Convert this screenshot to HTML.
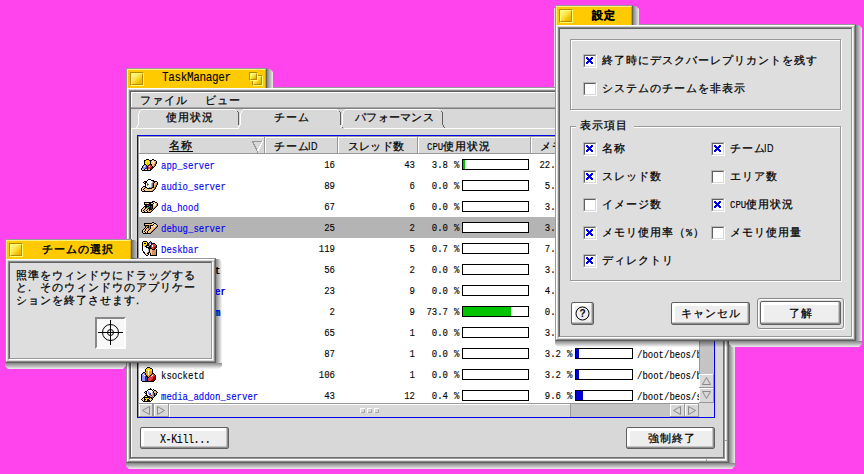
<!DOCTYPE html><html lang="ja"><head><meta charset="utf-8"><style>html,body{margin:0;padding:0;width:864px;height:474px;overflow:hidden;background:#FF44EE;position:relative;font-family:"Liberation Sans",sans-serif;}.t{position:absolute;white-space:nowrap;font-size:11px;line-height:12px;letter-spacing:1px;-webkit-text-stroke:0.25px currentColor;color:#000;}.m{position:absolute;white-space:nowrap;font-family:"Liberation Mono",monospace;font-size:9px;line-height:10px;color:#000;-webkit-text-stroke:0.1px currentColor;transform:scaleY(1.2);transform-origin:0 0;}svg{display:block}</style></head><body>
<div style="position:absolute;left:729px;top:88px;width:6px;height:375px;background:linear-gradient(to right,rgba(0,0,0,.46),rgba(0,0,0,.02)),linear-gradient(#F2F2F2,#F2F2F2);clip-path:polygon(0 0,3px 0,6px 3px,6px 100%,0 100%)"></div>
<div style="position:absolute;left:126px;top:463px;width:609px;height:6px;background:#F2F2F2;clip-path:polygon(0 0,100% 0,100% 3px,calc(100% - 3px) 100%,3px 100%,0 3px)"></div>
<div style="position:absolute;left:126px;top:463px;width:609px;height:6px;background:linear-gradient(to bottom,rgba(0,0,0,.46),rgba(0,0,0,.02));clip-path:polygon(0 0,100% 0,100% 3px,calc(100% - 3px) 100%,3px 100%,0 3px)"></div>
<div style="position:absolute;left:126px;top:87px;width:603px;height:376px;box-sizing:border-box;border-style:solid;border-width:1px;border-color:#989898 #606060 #606060 #989898;"><div style="width:100%;height:100%;box-sizing:border-box;border-style:solid;border-width:1px;border-color:#FFFFFF #888888 #888888 #FFFFFF;"><div style="width:100%;height:100%;box-sizing:border-box;border-style:solid;border-width:1px;border-color:#D8D8D8 #D8D8D8 #D8D8D8 #D8D8D8;"><div style="width:100%;height:100%;box-sizing:border-box;border-style:solid;border-width:1px;border-color:#888888 #FFFFFF #FFFFFF #888888;"><div style="width:100%;height:100%;box-sizing:border-box;border-style:solid;border-width:1px;border-color:#606060 #989898 #989898 #606060;"><div style="width:100%;height:100%;background:#D8D8D8"></div></div></div></div></div></div>
<div style="position:absolute;left:126px;top:68px;width:141px;height:20px;box-sizing:border-box;background:#FFCB00;border-top:1px solid #989898;border-left:1px solid #989898;border-right:1px solid #606060;"><div style="position:absolute;left:0;top:0;right:0;bottom:0;border-top:1px solid #FFF07A;border-left:1px solid #FFF07A;border-right:1px solid #D9A300"></div></div>
<div style="position:absolute;left:267px;top:69px;width:6px;height:19px;background:linear-gradient(to right,rgba(0,0,0,.46),rgba(0,0,0,.02)),linear-gradient(#F2F2F2,#F2F2F2);clip-path:polygon(0 0,3px 0,6px 3px,6px 100%,0 100%)"></div>
<div style="position:absolute;left:130px;top:72px;width:14px;height:14px;box-sizing:border-box;border:1px solid;border-color:#B88A00 #FFFF70 #FFFF70 #B88A00;"><div style="width:100%;height:100%;box-sizing:border-box;border:1px solid;border-color:#FFFF70 #B88A00 #B88A00 #FFFF70;background:linear-gradient(135deg,#FFFAA0,#FFE040 45%,#F0C000 75%,#E8B000)"></div></div>
<div class="m" style="left:162px;top:71px;font-size:11px;line-height:12px;letter-spacing:-0.35px;transform:scaleY(1.1)">TaskManager</div>
<div style="position:absolute;left:252px;top:75px;width:11px;height:11px;box-sizing:border-box;border:1px solid;border-color:#B88A00 #FFFF70 #FFFF70 #B88A00;"><div style="width:100%;height:100%;box-sizing:border-box;border:1px solid;border-color:#FFFF70 #B88A00 #B88A00 #FFFF70;background:linear-gradient(135deg,#FFFAA0,#FFE040 45%,#F0C000 75%,#E8B000)"></div></div>
<div style="position:absolute;left:249px;top:72px;width:9px;height:9px;box-sizing:border-box;border:1px solid;border-color:#B88A00 #FFFF70 #FFFF70 #B88A00;"><div style="width:100%;height:100%;box-sizing:border-box;border:1px solid;border-color:#FFFF70 #B88A00 #B88A00 #FFFF70;background:linear-gradient(135deg,#FFFAA0,#FFE040 45%,#F0C000 75%,#E8B000)"></div></div>
<div style="position:absolute;left:706px;top:459px;width:1px;height:2px;background:#A0A0A0"></div>
<div style="position:absolute;left:725px;top:440px;width:2px;height:1px;background:#A0A0A0"></div>
<div style="position:absolute;left:131px;top:92px;width:593px;height:1px;background:#FFFFFF"></div>
<div style="position:absolute;left:131px;top:92px;width:1px;height:15px;background:#FFFFFF"></div>
<div style="position:absolute;left:723px;top:92px;width:1px;height:366px;background:#6C6C6C"></div>
<div style="position:absolute;left:131px;top:457px;width:593px;height:1px;background:#6C6C6C"></div>
<div style="position:absolute;left:131px;top:107px;width:593px;height:1px;background:#A8A8A8"></div>
<div style="position:absolute;left:131px;top:108px;width:592px;height:1px;background:#808080"></div>
<div class="t" style="left:140px;top:94px;color:#000;">ファイル</div>
<div class="t" style="left:205px;top:94px;color:#000;">ビュー</div>
<svg style="position:absolute;left:0;top:0" width="864" height="474" shape-rendering="crispEdges"><rect x="131" y="128" width="108" height="1" fill="#FFFFFF"/><rect x="344" y="128" width="379" height="1" fill="#FFFFFF"/><rect x="131" y="128" width="1" height="329" fill="#FFFFFF"/><rect x="136" y="127" width="1" height="1" fill="#FFFFFF"/><rect x="137" y="125" width="1" height="2" fill="#FFFFFF"/><rect x="138" y="113" width="1" height="12" fill="#FFFFFF"/><rect x="139" y="111" width="1" height="2" fill="#FFFFFF"/><rect x="140" y="110" width="1" height="1" fill="#FFFFFF"/><rect x="141" y="109" width="94" height="1" fill="#FFFFFF"/><rect x="235" y="110" width="1" height="1" fill="#FFFFFF"/><rect x="237" y="111" width="1" height="1" fill="#606060"/><rect x="238" y="112" width="1" height="13" fill="#606060"/><rect x="238" y="127" width="1" height="1" fill="#FFFFFF"/><rect x="239" y="125" width="1" height="2" fill="#FFFFFF"/><rect x="240" y="113" width="1" height="12" fill="#FFFFFF"/><rect x="241" y="111" width="1" height="2" fill="#FFFFFF"/><rect x="242" y="110" width="1" height="1" fill="#FFFFFF"/><rect x="243" y="109" width="94" height="1" fill="#FFFFFF"/><rect x="337" y="110" width="1" height="1" fill="#FFFFFF"/><rect x="339" y="111" width="1" height="1" fill="#606060"/><rect x="340" y="112" width="1" height="13" fill="#606060"/><rect x="341" y="125" width="1" height="2" fill="#606060"/><rect x="342" y="127" width="1" height="1" fill="#606060"/><rect x="340" y="127" width="1" height="1" fill="#FFFFFF"/><rect x="341" y="125" width="1" height="2" fill="#FFFFFF"/><rect x="342" y="113" width="1" height="12" fill="#FFFFFF"/><rect x="343" y="111" width="1" height="2" fill="#FFFFFF"/><rect x="344" y="110" width="1" height="1" fill="#FFFFFF"/><rect x="345" y="109" width="94" height="1" fill="#FFFFFF"/><rect x="439" y="110" width="1" height="1" fill="#FFFFFF"/><rect x="441" y="111" width="1" height="1" fill="#606060"/><rect x="442" y="112" width="1" height="13" fill="#606060"/><rect x="443" y="125" width="1" height="2" fill="#606060"/><rect x="444" y="127" width="1" height="1" fill="#606060"/></svg>
<div class="t" style="left:166px;top:111px;color:#000;">使用状況</div>
<div class="t" style="left:274px;top:111px;color:#000;">チーム</div>
<div class="t" style="left:355px;top:111px;color:#000;letter-spacing:0.3px">パフォーマンス</div>
<div style="position:absolute;left:137px;top:135px;width:578px;height:283px;background:#0000F0"></div>
<div style="position:absolute;left:138px;top:136px;width:576px;height:281px;background:#FFFFFF"></div>
<div style="position:absolute;left:138px;top:136px;width:576px;height:1px;background:#989898"></div>
<div style="position:absolute;left:138px;top:136px;width:1px;height:281px;background:#989898"></div>
<div style="position:absolute;left:139px;top:137px;width:560px;height:17px;background:#D8D8D8"></div>
<div style="position:absolute;left:139px;top:137px;width:560px;height:1px;background:#FFFFFF"></div>
<div style="position:absolute;left:139px;top:137px;width:1px;height:16px;background:#FFFFFF"></div>
<div style="position:absolute;left:139px;top:153px;width:560px;height:1px;background:#989898"></div>
<div style="position:absolute;left:264px;top:137px;width:1px;height:17px;background:#989898"></div>
<div style="position:absolute;left:265px;top:137px;width:1px;height:16px;background:#FFFFFF"></div>
<div style="position:absolute;left:337px;top:137px;width:1px;height:17px;background:#989898"></div>
<div style="position:absolute;left:338px;top:137px;width:1px;height:16px;background:#FFFFFF"></div>
<div style="position:absolute;left:417px;top:137px;width:1px;height:17px;background:#989898"></div>
<div style="position:absolute;left:418px;top:137px;width:1px;height:16px;background:#FFFFFF"></div>
<div style="position:absolute;left:530px;top:137px;width:1px;height:17px;background:#989898"></div>
<div style="position:absolute;left:531px;top:137px;width:1px;height:16px;background:#FFFFFF"></div>
<div class="t" style="left:169px;top:139px;color:#000;text-decoration:underline;text-underline-offset:2px;">名称</div>
<svg style="position:absolute;left:251px;top:140px" width="13" height="13" shape-rendering="crispEdges"><path d="M1.5 1.5H11.5L6.5 11.5Z" fill="none" stroke="#989898" stroke-width="1"/><path d="M11.5 1.5L6.5 11.5" stroke="#FFFFFF" stroke-width="1"/></svg>
<div class="t" style="left:274px;top:140px;color:#000;">チーム<span style="display:inline-block;margin-left:-2px;font-family:Liberation Sans;font-size:9px;letter-spacing:0.5px;-webkit-text-stroke:0.1px #000;transform:scaleY(1.15);transform-origin:0 70%">ID</span></div>
<div class="t" style="left:348px;top:140px;color:#000;letter-spacing:0.2px">スレッド数</div>
<div class="t" style="left:427px;top:140px;color:#000;"><span style="display:inline-block;font-family:Liberation Mono;font-size:9px;letter-spacing:0;-webkit-text-stroke:0.1px #000;transform:scaleY(1.2);transform-origin:0 70%">CPU</span>使用状況</div>
<div class="t" style="left:540px;top:140px;color:#000;">メモリ</div>
<div style="position:absolute;left:138px;top:154px;width:561px;height:249px;overflow:hidden">
<svg style="position:absolute;left:3px;top:5px" width="17" height="12" shape-rendering="crispEdges"><rect x="5" y="0" width="3" height="1" fill="#000000"/><rect x="11" y="0" width="2" height="1" fill="#000000"/><rect x="3" y="1" width="2" height="1" fill="#000000"/><rect x="5" y="1" width="3" height="1" fill="#FFE000"/><rect x="8" y="1" width="3" height="1" fill="#000000"/><rect x="11" y="1" width="2" height="1" fill="#F4C88C"/><rect x="13" y="1" width="2" height="1" fill="#000000"/><rect x="3" y="2" width="1" height="1" fill="#000000"/><rect x="4" y="2" width="5" height="1" fill="#FFE000"/><rect x="9" y="2" width="1" height="1" fill="#000000"/><rect x="10" y="2" width="1" height="1" fill="#F4C88C"/><rect x="11" y="2" width="1" height="1" fill="#FFFFFF"/><rect x="12" y="2" width="3" height="1" fill="#F4C88C"/><rect x="15" y="2" width="1" height="1" fill="#000000"/><rect x="3" y="3" width="1" height="1" fill="#000000"/><rect x="4" y="3" width="5" height="1" fill="#FFE000"/><rect x="9" y="3" width="1" height="1" fill="#000000"/><rect x="10" y="3" width="2" height="1" fill="#F4C88C"/><rect x="12" y="3" width="1" height="1" fill="#FFFFFF"/><rect x="13" y="3" width="1" height="1" fill="#F4C88C"/><rect x="14" y="3" width="1" height="1" fill="#C07838"/><rect x="15" y="3" width="1" height="1" fill="#000000"/><rect x="3" y="4" width="1" height="1" fill="#000000"/><rect x="4" y="4" width="2" height="1" fill="#FFE000"/><rect x="6" y="4" width="1" height="1" fill="#F0A000"/><rect x="7" y="4" width="2" height="1" fill="#FFE000"/><rect x="9" y="4" width="1" height="1" fill="#000000"/><rect x="10" y="4" width="4" height="1" fill="#F4C88C"/><rect x="14" y="4" width="1" height="1" fill="#C07838"/><rect x="15" y="4" width="1" height="1" fill="#000000"/><rect x="3" y="5" width="2" height="1" fill="#000000"/><rect x="5" y="5" width="1" height="1" fill="#FFE000"/><rect x="6" y="5" width="1" height="1" fill="#F0A000"/><rect x="7" y="5" width="1" height="1" fill="#FFE000"/><rect x="8" y="5" width="3" height="1" fill="#000000"/><rect x="11" y="5" width="2" height="1" fill="#F4C88C"/><rect x="13" y="5" width="1" height="1" fill="#C07838"/><rect x="14" y="5" width="1" height="1" fill="#000000"/><rect x="2" y="6" width="1" height="1" fill="#000000"/><rect x="3" y="6" width="2" height="1" fill="#9090FF"/><rect x="5" y="6" width="1" height="1" fill="#000000"/><rect x="6" y="6" width="1" height="1" fill="#F0A000"/><rect x="7" y="6" width="1" height="1" fill="#000000"/><rect x="8" y="6" width="2" height="1" fill="#E04040"/><rect x="10" y="6" width="1" height="1" fill="#000000"/><rect x="11" y="6" width="2" height="1" fill="#F4C88C"/><rect x="13" y="6" width="1" height="1" fill="#C07838"/><rect x="14" y="6" width="1" height="1" fill="#000000"/><rect x="1" y="7" width="1" height="1" fill="#000000"/><rect x="2" y="7" width="1" height="1" fill="#9090FF"/><rect x="3" y="7" width="1" height="1" fill="#FFFFFF"/><rect x="4" y="7" width="1" height="1" fill="#9090FF"/><rect x="5" y="7" width="1" height="1" fill="#3030A0"/><rect x="6" y="7" width="1" height="1" fill="#000000"/><rect x="7" y="7" width="1" height="1" fill="#E04040"/><rect x="8" y="7" width="1" height="1" fill="#FFFFFF"/><rect x="9" y="7" width="2" height="1" fill="#E04040"/><rect x="11" y="7" width="1" height="1" fill="#000000"/><rect x="12" y="7" width="1" height="1" fill="#C07838"/><rect x="13" y="7" width="1" height="1" fill="#000000"/><rect x="1" y="8" width="1" height="1" fill="#000000"/><rect x="2" y="8" width="3" height="1" fill="#9090FF"/><rect x="5" y="8" width="1" height="1" fill="#3030A0"/><rect x="6" y="8" width="1" height="1" fill="#000000"/><rect x="7" y="8" width="3" height="1" fill="#E04040"/><rect x="10" y="8" width="1" height="1" fill="#A00000"/><rect x="11" y="8" width="2" height="1" fill="#000000"/><rect x="0" y="9" width="1" height="1" fill="#000000"/><rect x="1" y="9" width="3" height="1" fill="#9090FF"/><rect x="4" y="9" width="2" height="1" fill="#3030A0"/><rect x="6" y="9" width="1" height="1" fill="#000000"/><rect x="7" y="9" width="2" height="1" fill="#E04040"/><rect x="9" y="9" width="2" height="1" fill="#A00000"/><rect x="11" y="9" width="1" height="1" fill="#000000"/><rect x="0" y="10" width="1" height="1" fill="#000000"/><rect x="1" y="10" width="2" height="1" fill="#F4C88C"/><rect x="3" y="10" width="1" height="1" fill="#000000"/><rect x="4" y="10" width="2" height="1" fill="#F4C88C"/><rect x="6" y="10" width="1" height="1" fill="#000000"/><rect x="7" y="10" width="2" height="1" fill="#F4C88C"/><rect x="9" y="10" width="2" height="1" fill="#000000"/><rect x="1" y="11" width="9" height="1" fill="#000000"/></svg>
<div class="m" style="left:23px;top:7px;color:#0000F0">app_server</div>
<div class="m" style="left:-3px;width:200px;text-align:right;top:6px">16</div>
<div class="m" style="left:77px;width:200px;text-align:right;top:6px">43</div>
<div class="m" style="left:110px;width:200px;text-align:right;top:6px">3.8</div>
<div class="m" style="left:316px;top:6px">%</div>
<div style="position:absolute;left:324px;top:5px;width:67px;height:11px;box-sizing:border-box;border:1px solid #000;background:#FFF"><div style="width:2px;height:9px;background:#00C400"></div></div>
<div class="m" style="left:223px;width:200px;text-align:right;top:6px">22.5</div>
<div class="m" style="left:429px;top:6px">%</div>
<div style="position:absolute;left:437px;top:5px;width:58px;height:11px;box-sizing:border-box;border:1px solid #000;background:#FFF"><div style="width:13px;height:9px;background:#0000D0"></div></div>
<div class="m" style="left:499px;top:7px">/boot/beos/system/servers</div>
<svg style="position:absolute;left:3px;top:25px" width="17" height="13" shape-rendering="crispEdges"><rect x="7" y="0" width="3" height="1" fill="#000000"/><rect x="6" y="1" width="1" height="1" fill="#000000"/><rect x="7" y="1" width="3" height="1" fill="#FFFFFF"/><rect x="10" y="1" width="3" height="1" fill="#000000"/><rect x="3" y="2" width="3" height="1" fill="#000000"/><rect x="6" y="2" width="5" height="1" fill="#FFFFFF"/><rect x="11" y="2" width="1" height="1" fill="#B8B8B8"/><rect x="12" y="2" width="4" height="1" fill="#000000"/><rect x="2" y="3" width="1" height="1" fill="#000000"/><rect x="3" y="3" width="1" height="1" fill="#F4C88C"/><rect x="4" y="3" width="2" height="1" fill="#000000"/><rect x="6" y="3" width="5" height="1" fill="#FFFFFF"/><rect x="11" y="3" width="1" height="1" fill="#B8B8B8"/><rect x="12" y="3" width="1" height="1" fill="#707070"/><rect x="13" y="3" width="1" height="1" fill="#000000"/><rect x="14" y="3" width="2" height="1" fill="#F4C88C"/><rect x="16" y="3" width="1" height="1" fill="#000000"/><rect x="3" y="4" width="2" height="1" fill="#000000"/><rect x="5" y="4" width="1" height="1" fill="#FFFFFF"/><rect x="6" y="4" width="1" height="1" fill="#707070"/><rect x="7" y="4" width="3" height="1" fill="#FFFFFF"/><rect x="10" y="4" width="1" height="1" fill="#B8B8B8"/><rect x="11" y="4" width="1" height="1" fill="#707070"/><rect x="12" y="4" width="1" height="1" fill="#000000"/><rect x="13" y="4" width="2" height="1" fill="#F4C88C"/><rect x="15" y="4" width="1" height="1" fill="#C07838"/><rect x="16" y="4" width="1" height="1" fill="#000000"/><rect x="4" y="5" width="1" height="1" fill="#000000"/><rect x="5" y="5" width="1" height="1" fill="#FFFFFF"/><rect x="6" y="5" width="1" height="1" fill="#3030A0"/><rect x="7" y="5" width="1" height="1" fill="#707070"/><rect x="8" y="5" width="2" height="1" fill="#FFFFFF"/><rect x="10" y="5" width="1" height="1" fill="#B8B8B8"/><rect x="11" y="5" width="1" height="1" fill="#707070"/><rect x="12" y="5" width="1" height="1" fill="#000000"/><rect x="13" y="5" width="2" height="1" fill="#F4C88C"/><rect x="15" y="5" width="1" height="1" fill="#C07838"/><rect x="16" y="5" width="1" height="1" fill="#000000"/><rect x="4" y="6" width="1" height="1" fill="#000000"/><rect x="5" y="6" width="1" height="1" fill="#FFFFFF"/><rect x="6" y="6" width="1" height="1" fill="#707070"/><rect x="7" y="6" width="3" height="1" fill="#FFFFFF"/><rect x="10" y="6" width="1" height="1" fill="#B8B8B8"/><rect x="11" y="6" width="1" height="1" fill="#707070"/><rect x="12" y="6" width="1" height="1" fill="#000000"/><rect x="13" y="6" width="1" height="1" fill="#F4C88C"/><rect x="14" y="6" width="1" height="1" fill="#C07838"/><rect x="15" y="6" width="1" height="1" fill="#000000"/><rect x="2" y="7" width="3" height="1" fill="#000000"/><rect x="5" y="7" width="5" height="1" fill="#FFFFFF"/><rect x="10" y="7" width="1" height="1" fill="#B8B8B8"/><rect x="11" y="7" width="1" height="1" fill="#707070"/><rect x="12" y="7" width="1" height="1" fill="#000000"/><rect x="13" y="7" width="1" height="1" fill="#F4C88C"/><rect x="14" y="7" width="1" height="1" fill="#C07838"/><rect x="15" y="7" width="1" height="1" fill="#000000"/><rect x="1" y="8" width="1" height="1" fill="#000000"/><rect x="2" y="8" width="2" height="1" fill="#F4C88C"/><rect x="4" y="8" width="2" height="1" fill="#000000"/><rect x="6" y="8" width="2" height="1" fill="#FFFFFF"/><rect x="8" y="8" width="1" height="1" fill="#E04040"/><rect x="9" y="8" width="1" height="1" fill="#B8B8B8"/><rect x="10" y="8" width="1" height="1" fill="#707070"/><rect x="11" y="8" width="2" height="1" fill="#000000"/><rect x="13" y="8" width="1" height="1" fill="#C07838"/><rect x="14" y="8" width="1" height="1" fill="#000000"/><rect x="0" y="9" width="1" height="1" fill="#000000"/><rect x="1" y="9" width="2" height="1" fill="#F4C88C"/><rect x="3" y="9" width="1" height="1" fill="#000000"/><rect x="4" y="9" width="2" height="1" fill="#F4C88C"/><rect x="6" y="9" width="5" height="1" fill="#000000"/><rect x="11" y="9" width="2" height="1" fill="#F4C88C"/><rect x="13" y="9" width="1" height="1" fill="#C07838"/><rect x="14" y="9" width="1" height="1" fill="#000000"/><rect x="0" y="10" width="1" height="1" fill="#000000"/><rect x="1" y="10" width="1" height="1" fill="#F4C88C"/><rect x="2" y="10" width="1" height="1" fill="#000000"/><rect x="3" y="10" width="9" height="1" fill="#F4C88C"/><rect x="12" y="10" width="1" height="1" fill="#C07838"/><rect x="13" y="10" width="1" height="1" fill="#000000"/><rect x="0" y="11" width="1" height="1" fill="#000000"/><rect x="1" y="11" width="2" height="1" fill="#F4C88C"/><rect x="3" y="11" width="1" height="1" fill="#000000"/><rect x="4" y="11" width="7" height="1" fill="#F4C88C"/><rect x="11" y="11" width="1" height="1" fill="#C07838"/><rect x="12" y="11" width="1" height="1" fill="#000000"/><rect x="1" y="12" width="11" height="1" fill="#000000"/></svg>
<div class="m" style="left:23px;top:28px;color:#0000F0">audio_server</div>
<div class="m" style="left:-3px;width:200px;text-align:right;top:27px">89</div>
<div class="m" style="left:77px;width:200px;text-align:right;top:27px">6</div>
<div class="m" style="left:110px;width:200px;text-align:right;top:27px">0.0</div>
<div class="m" style="left:316px;top:27px">%</div>
<div style="position:absolute;left:324px;top:26px;width:67px;height:11px;box-sizing:border-box;border:1px solid #000;background:#FFF"><div style="width:0px;height:9px;background:#00C400"></div></div>
<div class="m" style="left:223px;width:200px;text-align:right;top:27px">5.1</div>
<div class="m" style="left:429px;top:27px">%</div>
<div style="position:absolute;left:437px;top:26px;width:58px;height:11px;box-sizing:border-box;border:1px solid #000;background:#FFF"><div style="width:3px;height:9px;background:#0000D0"></div></div>
<div class="m" style="left:499px;top:28px">/boot/beos/system/servers</div>
<svg style="position:absolute;left:3px;top:47px" width="17" height="12" shape-rendering="crispEdges"><rect x="11" y="0" width="3" height="1" fill="#000000"/><rect x="3" y="1" width="9" height="1" fill="#000000"/><rect x="12" y="1" width="2" height="1" fill="#F4C88C"/><rect x="14" y="1" width="2" height="1" fill="#000000"/><rect x="3" y="2" width="1" height="1" fill="#000000"/><rect x="4" y="2" width="4" height="1" fill="#F4C88C"/><rect x="8" y="2" width="2" height="1" fill="#000000"/><rect x="10" y="2" width="2" height="1" fill="#F4C88C"/><rect x="12" y="2" width="1" height="1" fill="#000000"/><rect x="13" y="2" width="1" height="1" fill="#FFFFFF"/><rect x="14" y="2" width="2" height="1" fill="#F4C88C"/><rect x="16" y="2" width="1" height="1" fill="#000000"/><rect x="3" y="3" width="9" height="1" fill="#000000"/><rect x="12" y="3" width="1" height="1" fill="#F4C88C"/><rect x="13" y="3" width="2" height="1" fill="#FFFFFF"/><rect x="15" y="3" width="1" height="1" fill="#C07838"/><rect x="16" y="3" width="1" height="1" fill="#000000"/><rect x="4" y="4" width="2" height="1" fill="#000000"/><rect x="6" y="4" width="1" height="1" fill="#707070"/><rect x="7" y="4" width="1" height="1" fill="#3030A0"/><rect x="8" y="4" width="4" height="1" fill="#000000"/><rect x="12" y="4" width="1" height="1" fill="#F4C88C"/><rect x="13" y="4" width="1" height="1" fill="#FFFFFF"/><rect x="14" y="4" width="1" height="1" fill="#F4C88C"/><rect x="15" y="4" width="1" height="1" fill="#C07838"/><rect x="16" y="4" width="1" height="1" fill="#000000"/><rect x="3" y="5" width="5" height="1" fill="#000000"/><rect x="8" y="5" width="1" height="1" fill="#00C040"/><rect x="9" y="5" width="1" height="1" fill="#000000"/><rect x="10" y="5" width="1" height="1" fill="#3030A0"/><rect x="11" y="5" width="1" height="1" fill="#000000"/><rect x="12" y="5" width="2" height="1" fill="#F4C88C"/><rect x="14" y="5" width="1" height="1" fill="#C07838"/><rect x="15" y="5" width="1" height="1" fill="#000000"/><rect x="2" y="6" width="1" height="1" fill="#000000"/><rect x="3" y="6" width="1" height="1" fill="#F4C88C"/><rect x="4" y="6" width="2" height="1" fill="#000000"/><rect x="6" y="6" width="1" height="1" fill="#00D0F0"/><rect x="7" y="6" width="1" height="1" fill="#00C040"/><rect x="8" y="6" width="2" height="1" fill="#000000"/><rect x="10" y="6" width="1" height="1" fill="#3030A0"/><rect x="11" y="6" width="1" height="1" fill="#000000"/><rect x="12" y="6" width="1" height="1" fill="#F4C88C"/><rect x="13" y="6" width="1" height="1" fill="#C07838"/><rect x="14" y="6" width="1" height="1" fill="#000000"/><rect x="1" y="7" width="1" height="1" fill="#000000"/><rect x="2" y="7" width="2" height="1" fill="#F4C88C"/><rect x="4" y="7" width="1" height="1" fill="#000000"/><rect x="5" y="7" width="1" height="1" fill="#F4C88C"/><rect x="6" y="7" width="1" height="1" fill="#00D0F0"/><rect x="7" y="7" width="3" height="1" fill="#000000"/><rect x="10" y="7" width="1" height="1" fill="#3030A0"/><rect x="11" y="7" width="1" height="1" fill="#000000"/><rect x="12" y="7" width="1" height="1" fill="#C07838"/><rect x="13" y="7" width="1" height="1" fill="#000000"/><rect x="0" y="8" width="1" height="1" fill="#000000"/><rect x="1" y="8" width="2" height="1" fill="#F4C88C"/><rect x="3" y="8" width="1" height="1" fill="#000000"/><rect x="4" y="8" width="2" height="1" fill="#F4C88C"/><rect x="6" y="8" width="1" height="1" fill="#000000"/><rect x="7" y="8" width="1" height="1" fill="#F4C88C"/><rect x="8" y="8" width="3" height="1" fill="#000000"/><rect x="11" y="8" width="1" height="1" fill="#C07838"/><rect x="12" y="8" width="1" height="1" fill="#000000"/><rect x="0" y="9" width="1" height="1" fill="#000000"/><rect x="1" y="9" width="1" height="1" fill="#F4C88C"/><rect x="2" y="9" width="1" height="1" fill="#000000"/><rect x="3" y="9" width="2" height="1" fill="#F4C88C"/><rect x="5" y="9" width="1" height="1" fill="#000000"/><rect x="6" y="9" width="2" height="1" fill="#F4C88C"/><rect x="8" y="9" width="1" height="1" fill="#000000"/><rect x="9" y="9" width="1" height="1" fill="#F4C88C"/><rect x="10" y="9" width="1" height="1" fill="#C07838"/><rect x="11" y="9" width="1" height="1" fill="#000000"/><rect x="0" y="10" width="1" height="1" fill="#000000"/><rect x="1" y="10" width="2" height="1" fill="#F4C88C"/><rect x="3" y="10" width="1" height="1" fill="#000000"/><rect x="4" y="10" width="2" height="1" fill="#F4C88C"/><rect x="6" y="10" width="1" height="1" fill="#000000"/><rect x="7" y="10" width="2" height="1" fill="#F4C88C"/><rect x="9" y="10" width="1" height="1" fill="#C07838"/><rect x="10" y="10" width="1" height="1" fill="#000000"/><rect x="1" y="11" width="9" height="1" fill="#000000"/></svg>
<div class="m" style="left:23px;top:49px;color:#0000F0">da_hood</div>
<div class="m" style="left:-3px;width:200px;text-align:right;top:48px">67</div>
<div class="m" style="left:77px;width:200px;text-align:right;top:48px">6</div>
<div class="m" style="left:110px;width:200px;text-align:right;top:48px">0.0</div>
<div class="m" style="left:316px;top:48px">%</div>
<div style="position:absolute;left:324px;top:47px;width:67px;height:11px;box-sizing:border-box;border:1px solid #000;background:#FFF"><div style="width:0px;height:9px;background:#00C400"></div></div>
<div class="m" style="left:223px;width:200px;text-align:right;top:48px">3.2</div>
<div class="m" style="left:429px;top:48px">%</div>
<div style="position:absolute;left:437px;top:47px;width:58px;height:11px;box-sizing:border-box;border:1px solid #000;background:#FFF"><div style="width:3px;height:9px;background:#0000D0"></div></div>
<div class="m" style="left:499px;top:49px">/boot/beos/system/servers</div>
<div style="position:absolute;left:1px;top:63px;width:560px;height:21px;background:#B4B4B4"></div>
<svg style="position:absolute;left:4px;top:68px" width="16" height="12" shape-rendering="crispEdges"><rect x="10" y="0" width="2" height="1" fill="#000000"/><rect x="2" y="1" width="8" height="1" fill="#000000"/><rect x="10" y="1" width="2" height="1" fill="#F4C88C"/><rect x="12" y="1" width="2" height="1" fill="#000000"/><rect x="2" y="2" width="1" height="1" fill="#000000"/><rect x="3" y="2" width="8" height="1" fill="#F4C88C"/><rect x="11" y="2" width="1" height="1" fill="#000000"/><rect x="12" y="2" width="1" height="1" fill="#FFFFFF"/><rect x="13" y="2" width="1" height="1" fill="#F4C88C"/><rect x="14" y="2" width="1" height="1" fill="#000000"/><rect x="2" y="3" width="5" height="1" fill="#000000"/><rect x="7" y="3" width="1" height="1" fill="#C07838"/><rect x="8" y="3" width="3" height="1" fill="#000000"/><rect x="11" y="3" width="2" height="1" fill="#F4C88C"/><rect x="13" y="3" width="1" height="1" fill="#FFFFFF"/><rect x="14" y="3" width="1" height="1" fill="#F4C88C"/><rect x="15" y="3" width="1" height="1" fill="#000000"/><rect x="3" y="4" width="1" height="1" fill="#000000"/><rect x="4" y="4" width="2" height="1" fill="#C07838"/><rect x="6" y="4" width="1" height="1" fill="#000000"/><rect x="7" y="4" width="1" height="1" fill="#C07838"/><rect x="8" y="4" width="1" height="1" fill="#000000"/><rect x="9" y="4" width="1" height="1" fill="#FFFFFF"/><rect x="10" y="4" width="2" height="1" fill="#F4C88C"/><rect x="12" y="4" width="1" height="1" fill="#FFFFFF"/><rect x="13" y="4" width="1" height="1" fill="#F4C88C"/><rect x="14" y="4" width="1" height="1" fill="#C07838"/><rect x="15" y="4" width="1" height="1" fill="#000000"/><rect x="3" y="5" width="1" height="1" fill="#000000"/><rect x="4" y="5" width="1" height="1" fill="#F4C88C"/><rect x="5" y="5" width="2" height="1" fill="#000000"/><rect x="7" y="5" width="1" height="1" fill="#C07838"/><rect x="8" y="5" width="1" height="1" fill="#000000"/><rect x="9" y="5" width="4" height="1" fill="#F4C88C"/><rect x="13" y="5" width="1" height="1" fill="#C07838"/><rect x="14" y="5" width="1" height="1" fill="#000000"/><rect x="2" y="6" width="1" height="1" fill="#000000"/><rect x="3" y="6" width="1" height="1" fill="#F4C88C"/><rect x="4" y="6" width="1" height="1" fill="#000000"/><rect x="5" y="6" width="1" height="1" fill="#F4C88C"/><rect x="6" y="6" width="2" height="1" fill="#C07838"/><rect x="8" y="6" width="1" height="1" fill="#000000"/><rect x="9" y="6" width="3" height="1" fill="#F4C88C"/><rect x="12" y="6" width="1" height="1" fill="#C07838"/><rect x="13" y="6" width="1" height="1" fill="#000000"/><rect x="1" y="7" width="1" height="1" fill="#000000"/><rect x="2" y="7" width="1" height="1" fill="#F4C88C"/><rect x="3" y="7" width="1" height="1" fill="#000000"/><rect x="4" y="7" width="2" height="1" fill="#F4C88C"/><rect x="6" y="7" width="1" height="1" fill="#C07838"/><rect x="7" y="7" width="1" height="1" fill="#000000"/><rect x="8" y="7" width="3" height="1" fill="#F4C88C"/><rect x="11" y="7" width="1" height="1" fill="#C07838"/><rect x="12" y="7" width="1" height="1" fill="#000000"/><rect x="0" y="8" width="1" height="1" fill="#000000"/><rect x="1" y="8" width="2" height="1" fill="#F4C88C"/><rect x="3" y="8" width="1" height="1" fill="#000000"/><rect x="4" y="8" width="2" height="1" fill="#F4C88C"/><rect x="6" y="8" width="1" height="1" fill="#000000"/><rect x="7" y="8" width="3" height="1" fill="#F4C88C"/><rect x="10" y="8" width="1" height="1" fill="#C07838"/><rect x="11" y="8" width="1" height="1" fill="#000000"/><rect x="0" y="9" width="1" height="1" fill="#000000"/><rect x="1" y="9" width="1" height="1" fill="#F4C88C"/><rect x="2" y="9" width="1" height="1" fill="#000000"/><rect x="3" y="9" width="2" height="1" fill="#F4C88C"/><rect x="5" y="9" width="1" height="1" fill="#000000"/><rect x="6" y="9" width="3" height="1" fill="#F4C88C"/><rect x="9" y="9" width="1" height="1" fill="#C07838"/><rect x="10" y="9" width="1" height="1" fill="#000000"/><rect x="0" y="10" width="1" height="1" fill="#000000"/><rect x="1" y="10" width="2" height="1" fill="#F4C88C"/><rect x="3" y="10" width="1" height="1" fill="#000000"/><rect x="4" y="10" width="1" height="1" fill="#F4C88C"/><rect x="5" y="10" width="1" height="1" fill="#000000"/><rect x="6" y="10" width="2" height="1" fill="#F4C88C"/><rect x="8" y="10" width="1" height="1" fill="#C07838"/><rect x="9" y="10" width="1" height="1" fill="#000000"/><rect x="1" y="11" width="8" height="1" fill="#000000"/></svg>
<div class="m" style="left:23px;top:70px;color:#0000F0">debug_server</div>
<div class="m" style="left:-3px;width:200px;text-align:right;top:69px">25</div>
<div class="m" style="left:77px;width:200px;text-align:right;top:69px">2</div>
<div class="m" style="left:110px;width:200px;text-align:right;top:69px">0.0</div>
<div class="m" style="left:316px;top:69px">%</div>
<div style="position:absolute;left:324px;top:68px;width:67px;height:11px;box-sizing:border-box;border:1px solid #000;background:#FFF"><div style="width:0px;height:9px;background:#00C400"></div></div>
<div class="m" style="left:223px;width:200px;text-align:right;top:69px">3.2</div>
<div class="m" style="left:429px;top:69px">%</div>
<div style="position:absolute;left:437px;top:68px;width:58px;height:11px;box-sizing:border-box;border:1px solid #000;background:#FFF"><div style="width:3px;height:9px;background:#0000D0"></div></div>
<div class="m" style="left:499px;top:70px">/boot/beos/system/servers</div>
<svg style="position:absolute;left:3px;top:87px" width="17" height="15" shape-rendering="crispEdges"><rect x="2" y="0" width="4" height="1" fill="#000000"/><rect x="9" y="0" width="1" height="1" fill="#000000"/><rect x="1" y="1" width="1" height="1" fill="#000000"/><rect x="2" y="1" width="4" height="1" fill="#FFE000"/><rect x="6" y="1" width="1" height="1" fill="#000000"/><rect x="8" y="1" width="1" height="1" fill="#000000"/><rect x="9" y="1" width="1" height="1" fill="#9090FF"/><rect x="10" y="1" width="1" height="1" fill="#000000"/><rect x="1" y="2" width="1" height="1" fill="#000000"/><rect x="2" y="2" width="1" height="1" fill="#FFE000"/><rect x="3" y="2" width="2" height="1" fill="#000000"/><rect x="5" y="2" width="1" height="1" fill="#FFE000"/><rect x="6" y="2" width="2" height="1" fill="#000000"/><rect x="8" y="2" width="2" height="1" fill="#9090FF"/><rect x="10" y="2" width="4" height="1" fill="#000000"/><rect x="1" y="3" width="1" height="1" fill="#000000"/><rect x="2" y="3" width="4" height="1" fill="#FFE000"/><rect x="6" y="3" width="2" height="1" fill="#000000"/><rect x="8" y="3" width="1" height="1" fill="#9090FF"/><rect x="9" y="3" width="1" height="1" fill="#FFFFFF"/><rect x="10" y="3" width="1" height="1" fill="#000000"/><rect x="11" y="3" width="3" height="1" fill="#E04040"/><rect x="14" y="3" width="1" height="1" fill="#000000"/><rect x="1" y="4" width="1" height="1" fill="#000000"/><rect x="2" y="4" width="3" height="1" fill="#FFE000"/><rect x="5" y="4" width="3" height="1" fill="#000000"/><rect x="8" y="4" width="1" height="1" fill="#9090FF"/><rect x="9" y="4" width="1" height="1" fill="#000000"/><rect x="10" y="4" width="1" height="1" fill="#E04040"/><rect x="11" y="4" width="1" height="1" fill="#FFFFFF"/><rect x="12" y="4" width="3" height="1" fill="#E04040"/><rect x="15" y="4" width="1" height="1" fill="#000000"/><rect x="1" y="5" width="1" height="1" fill="#000000"/><rect x="2" y="5" width="1" height="1" fill="#FFFFFF"/><rect x="3" y="5" width="1" height="1" fill="#B8B8B8"/><rect x="4" y="5" width="2" height="1" fill="#000000"/><rect x="6" y="5" width="2" height="1" fill="#B8B8B8"/><rect x="8" y="5" width="2" height="1" fill="#000000"/><rect x="10" y="5" width="1" height="1" fill="#E04040"/><rect x="11" y="5" width="1" height="1" fill="#FFFFFF"/><rect x="12" y="5" width="2" height="1" fill="#E04040"/><rect x="14" y="5" width="1" height="1" fill="#A00000"/><rect x="15" y="5" width="1" height="1" fill="#000000"/><rect x="1" y="6" width="1" height="1" fill="#000000"/><rect x="2" y="6" width="3" height="1" fill="#FFFFFF"/><rect x="5" y="6" width="5" height="1" fill="#000000"/><rect x="10" y="6" width="3" height="1" fill="#E04040"/><rect x="13" y="6" width="2" height="1" fill="#A00000"/><rect x="15" y="6" width="1" height="1" fill="#000000"/><rect x="1" y="7" width="1" height="1" fill="#000000"/><rect x="2" y="7" width="5" height="1" fill="#FFFFFF"/><rect x="7" y="7" width="4" height="1" fill="#000000"/><rect x="11" y="7" width="2" height="1" fill="#E04040"/><rect x="13" y="7" width="1" height="1" fill="#A00000"/><rect x="14" y="7" width="1" height="1" fill="#000000"/><rect x="1" y="8" width="1" height="1" fill="#000000"/><rect x="2" y="8" width="5" height="1" fill="#FFFFFF"/><rect x="7" y="8" width="1" height="1" fill="#B8B8B8"/><rect x="8" y="8" width="1" height="1" fill="#000000"/><rect x="9" y="8" width="2" height="1" fill="#F4C88C"/><rect x="11" y="8" width="3" height="1" fill="#000000"/><rect x="14" y="8" width="1" height="1" fill="#F4C88C"/><rect x="15" y="8" width="1" height="1" fill="#000000"/><rect x="1" y="9" width="1" height="1" fill="#000000"/><rect x="2" y="9" width="5" height="1" fill="#FFFFFF"/><rect x="7" y="9" width="1" height="1" fill="#B8B8B8"/><rect x="8" y="9" width="1" height="1" fill="#000000"/><rect x="9" y="9" width="2" height="1" fill="#F4C88C"/><rect x="11" y="9" width="4" height="1" fill="#D09058"/><rect x="15" y="9" width="1" height="1" fill="#000000"/><rect x="2" y="10" width="1" height="1" fill="#000000"/><rect x="3" y="10" width="4" height="1" fill="#FFFFFF"/><rect x="7" y="10" width="1" height="1" fill="#B8B8B8"/><rect x="8" y="10" width="1" height="1" fill="#000000"/><rect x="9" y="10" width="2" height="1" fill="#F4C88C"/><rect x="11" y="10" width="4" height="1" fill="#D09058"/><rect x="15" y="10" width="1" height="1" fill="#000000"/><rect x="2" y="11" width="2" height="1" fill="#000000"/><rect x="4" y="11" width="2" height="1" fill="#FFFFFF"/><rect x="6" y="11" width="1" height="1" fill="#B8B8B8"/><rect x="7" y="11" width="2" height="1" fill="#000000"/><rect x="9" y="11" width="2" height="1" fill="#F4C88C"/><rect x="11" y="11" width="4" height="1" fill="#D09058"/><rect x="15" y="11" width="1" height="1" fill="#000000"/><rect x="3" y="12" width="1" height="1" fill="#000000"/><rect x="4" y="12" width="2" height="1" fill="#F4C88C"/><rect x="6" y="12" width="2" height="1" fill="#000000"/><rect x="9" y="12" width="1" height="1" fill="#000000"/><rect x="10" y="12" width="1" height="1" fill="#F4C88C"/><rect x="11" y="12" width="4" height="1" fill="#D09058"/><rect x="15" y="12" width="1" height="1" fill="#000000"/><rect x="4" y="13" width="1" height="1" fill="#000000"/><rect x="5" y="13" width="2" height="1" fill="#F4C88C"/><rect x="7" y="13" width="1" height="1" fill="#000000"/><rect x="9" y="13" width="1" height="1" fill="#000000"/><rect x="10" y="13" width="1" height="1" fill="#F4C88C"/><rect x="11" y="13" width="4" height="1" fill="#D09058"/><rect x="15" y="13" width="1" height="1" fill="#000000"/><rect x="5" y="14" width="2" height="1" fill="#000000"/><rect x="9" y="14" width="7" height="1" fill="#000000"/></svg>
<div class="m" style="left:23px;top:91px;color:#0000F0">Deskbar</div>
<div class="m" style="left:-3px;width:200px;text-align:right;top:90px">119</div>
<div class="m" style="left:77px;width:200px;text-align:right;top:90px">5</div>
<div class="m" style="left:110px;width:200px;text-align:right;top:90px">0.7</div>
<div class="m" style="left:316px;top:90px">%</div>
<div style="position:absolute;left:324px;top:89px;width:67px;height:11px;box-sizing:border-box;border:1px solid #000;background:#FFF"><div style="width:0px;height:9px;background:#00C400"></div></div>
<div class="m" style="left:223px;width:200px;text-align:right;top:90px">7.0</div>
<div class="m" style="left:429px;top:90px">%</div>
<div style="position:absolute;left:437px;top:89px;width:58px;height:11px;box-sizing:border-box;border:1px solid #000;background:#FFF"><div style="width:4px;height:9px;background:#0000D0"></div></div>
<div class="m" style="left:499px;top:91px">/boot/beos/system/servers</div>
<div class="m" style="left:23px;top:112px;color:#000">dhcp_client</div>
<div class="m" style="left:-3px;width:200px;text-align:right;top:111px">56</div>
<div class="m" style="left:77px;width:200px;text-align:right;top:111px">2</div>
<div class="m" style="left:110px;width:200px;text-align:right;top:111px">0.0</div>
<div class="m" style="left:316px;top:111px">%</div>
<div style="position:absolute;left:324px;top:110px;width:67px;height:11px;box-sizing:border-box;border:1px solid #000;background:#FFF"><div style="width:0px;height:9px;background:#00C400"></div></div>
<div class="m" style="left:223px;width:200px;text-align:right;top:111px">3.2</div>
<div class="m" style="left:429px;top:111px">%</div>
<div style="position:absolute;left:437px;top:110px;width:58px;height:11px;box-sizing:border-box;border:1px solid #000;background:#FFF"><div style="width:3px;height:9px;background:#0000D0"></div></div>
<div class="m" style="left:499px;top:112px">/boot/beos/system/servers</div>
<div class="m" style="left:23px;top:133px;color:#0000F0">media_server</div>
<div class="m" style="left:-3px;width:200px;text-align:right;top:132px">23</div>
<div class="m" style="left:77px;width:200px;text-align:right;top:132px">9</div>
<div class="m" style="left:110px;width:200px;text-align:right;top:132px">0.0</div>
<div class="m" style="left:316px;top:132px">%</div>
<div style="position:absolute;left:324px;top:131px;width:67px;height:11px;box-sizing:border-box;border:1px solid #000;background:#FFF"><div style="width:0px;height:9px;background:#00C400"></div></div>
<div class="m" style="left:223px;width:200px;text-align:right;top:132px">4.4</div>
<div class="m" style="left:429px;top:132px">%</div>
<div style="position:absolute;left:437px;top:131px;width:58px;height:11px;box-sizing:border-box;border:1px solid #000;background:#FFF"><div style="width:2px;height:9px;background:#0000D0"></div></div>
<div class="m" style="left:499px;top:133px">/boot/beos/system/servers</div>
<div class="m" style="left:23px;top:154px;color:#0000F0">kernel_team</div>
<div class="m" style="left:-3px;width:200px;text-align:right;top:153px">2</div>
<div class="m" style="left:77px;width:200px;text-align:right;top:153px">9</div>
<div class="m" style="left:110px;width:200px;text-align:right;top:153px">73.7</div>
<div class="m" style="left:316px;top:153px">%</div>
<div style="position:absolute;left:324px;top:152px;width:67px;height:11px;box-sizing:border-box;border:1px solid #000;background:#FFF"><div style="width:48px;height:9px;background:#00C400"></div></div>
<div class="m" style="left:223px;width:200px;text-align:right;top:153px">0.0</div>
<div class="m" style="left:429px;top:153px">%</div>
<div style="position:absolute;left:437px;top:152px;width:58px;height:11px;box-sizing:border-box;border:1px solid #000;background:#FFF"><div style="width:0px;height:9px;background:#0000D0"></div></div>
<div class="m" style="left:499px;top:154px">/boot/beos/system/servers</div>
<div class="m" style="left:23px;top:175px;color:#0000F0">Tracker</div>
<div class="m" style="left:-3px;width:200px;text-align:right;top:174px">65</div>
<div class="m" style="left:77px;width:200px;text-align:right;top:174px">1</div>
<div class="m" style="left:110px;width:200px;text-align:right;top:174px">0.0</div>
<div class="m" style="left:316px;top:174px">%</div>
<div style="position:absolute;left:324px;top:173px;width:67px;height:11px;box-sizing:border-box;border:1px solid #000;background:#FFF"><div style="width:0px;height:9px;background:#00C400"></div></div>
<div class="m" style="left:223px;width:200px;text-align:right;top:174px">3.2</div>
<div class="m" style="left:429px;top:174px">%</div>
<div style="position:absolute;left:437px;top:173px;width:58px;height:11px;box-sizing:border-box;border:1px solid #000;background:#FFF"><div style="width:3px;height:9px;background:#0000D0"></div></div>
<div class="m" style="left:499px;top:175px">/boot/beos/system/servers</div>
<div class="m" style="left:23px;top:196px;color:#0000F0">Terminal</div>
<div class="m" style="left:-3px;width:200px;text-align:right;top:195px">87</div>
<div class="m" style="left:77px;width:200px;text-align:right;top:195px">1</div>
<div class="m" style="left:110px;width:200px;text-align:right;top:195px">0.0</div>
<div class="m" style="left:316px;top:195px">%</div>
<div style="position:absolute;left:324px;top:194px;width:67px;height:11px;box-sizing:border-box;border:1px solid #000;background:#FFF"><div style="width:0px;height:9px;background:#00C400"></div></div>
<div class="m" style="left:223px;width:200px;text-align:right;top:195px">3.2</div>
<div class="m" style="left:429px;top:195px">%</div>
<div style="position:absolute;left:437px;top:194px;width:58px;height:11px;box-sizing:border-box;border:1px solid #000;background:#FFF"><div style="width:3px;height:9px;background:#0000D0"></div></div>
<div class="m" style="left:499px;top:196px">/boot/beos/bin/ksocketd</div>
<svg style="position:absolute;left:3px;top:213px" width="16" height="15" shape-rendering="crispEdges"><rect x="6" y="0" width="3" height="1" fill="#000000"/><rect x="5" y="1" width="1" height="1" fill="#000000"/><rect x="6" y="1" width="3" height="1" fill="#FFE000"/><rect x="9" y="1" width="2" height="1" fill="#000000"/><rect x="4" y="2" width="1" height="1" fill="#000000"/><rect x="5" y="2" width="6" height="1" fill="#FFE000"/><rect x="11" y="2" width="1" height="1" fill="#000000"/><rect x="4" y="3" width="1" height="1" fill="#000000"/><rect x="5" y="3" width="2" height="1" fill="#FFE000"/><rect x="7" y="3" width="1" height="1" fill="#FFFFFF"/><rect x="8" y="3" width="3" height="1" fill="#FFE000"/><rect x="11" y="3" width="1" height="1" fill="#000000"/><rect x="4" y="4" width="1" height="1" fill="#000000"/><rect x="5" y="4" width="2" height="1" fill="#F0A000"/><rect x="7" y="4" width="1" height="1" fill="#FFFFFF"/><rect x="8" y="4" width="3" height="1" fill="#F0A000"/><rect x="11" y="4" width="1" height="1" fill="#000000"/><rect x="2" y="5" width="2" height="1" fill="#000000"/><rect x="4" y="5" width="3" height="1" fill="#F0A000"/><rect x="7" y="5" width="1" height="1" fill="#FFFFFF"/><rect x="8" y="5" width="3" height="1" fill="#F0A000"/><rect x="11" y="5" width="1" height="1" fill="#000000"/><rect x="1" y="6" width="1" height="1" fill="#000000"/><rect x="2" y="6" width="2" height="1" fill="#9090FF"/><rect x="4" y="6" width="1" height="1" fill="#000000"/><rect x="5" y="6" width="2" height="1" fill="#F0A000"/><rect x="7" y="6" width="1" height="1" fill="#FFFFFF"/><rect x="8" y="6" width="3" height="1" fill="#F0A000"/><rect x="11" y="6" width="2" height="1" fill="#000000"/><rect x="0" y="7" width="1" height="1" fill="#000000"/><rect x="1" y="7" width="1" height="1" fill="#9090FF"/><rect x="2" y="7" width="1" height="1" fill="#FFFFFF"/><rect x="3" y="7" width="1" height="1" fill="#9090FF"/><rect x="4" y="7" width="1" height="1" fill="#000000"/><rect x="5" y="7" width="2" height="1" fill="#F0A000"/><rect x="7" y="7" width="1" height="1" fill="#FFFFFF"/><rect x="8" y="7" width="2" height="1" fill="#F0A000"/><rect x="10" y="7" width="1" height="1" fill="#000000"/><rect x="11" y="7" width="2" height="1" fill="#E04040"/><rect x="13" y="7" width="1" height="1" fill="#000000"/><rect x="0" y="8" width="1" height="1" fill="#000000"/><rect x="1" y="8" width="2" height="1" fill="#9090FF"/><rect x="3" y="8" width="1" height="1" fill="#FFFFFF"/><rect x="4" y="8" width="1" height="1" fill="#9090FF"/><rect x="5" y="8" width="1" height="1" fill="#000000"/><rect x="6" y="8" width="3" height="1" fill="#F0A000"/><rect x="9" y="8" width="1" height="1" fill="#000000"/><rect x="10" y="8" width="1" height="1" fill="#E04040"/><rect x="11" y="8" width="1" height="1" fill="#FFFFFF"/><rect x="12" y="8" width="2" height="1" fill="#E04040"/><rect x="14" y="8" width="1" height="1" fill="#000000"/><rect x="0" y="9" width="1" height="1" fill="#000000"/><rect x="1" y="9" width="3" height="1" fill="#9090FF"/><rect x="4" y="9" width="1" height="1" fill="#3030A0"/><rect x="5" y="9" width="2" height="1" fill="#000000"/><rect x="7" y="9" width="1" height="1" fill="#F0A000"/><rect x="8" y="9" width="1" height="1" fill="#000000"/><rect x="9" y="9" width="1" height="1" fill="#E04040"/><rect x="10" y="9" width="1" height="1" fill="#FFFFFF"/><rect x="11" y="9" width="2" height="1" fill="#E04040"/><rect x="13" y="9" width="1" height="1" fill="#A00000"/><rect x="14" y="9" width="1" height="1" fill="#000000"/><rect x="0" y="10" width="1" height="1" fill="#000000"/><rect x="1" y="10" width="3" height="1" fill="#9090FF"/><rect x="4" y="10" width="2" height="1" fill="#3030A0"/><rect x="6" y="10" width="2" height="1" fill="#000000"/><rect x="8" y="10" width="4" height="1" fill="#E04040"/><rect x="12" y="10" width="2" height="1" fill="#A00000"/><rect x="14" y="10" width="1" height="1" fill="#000000"/><rect x="0" y="11" width="1" height="1" fill="#000000"/><rect x="1" y="11" width="3" height="1" fill="#9090FF"/><rect x="4" y="11" width="2" height="1" fill="#3030A0"/><rect x="6" y="11" width="1" height="1" fill="#000000"/><rect x="7" y="11" width="5" height="1" fill="#E04040"/><rect x="12" y="11" width="2" height="1" fill="#A00000"/><rect x="14" y="11" width="1" height="1" fill="#000000"/><rect x="0" y="12" width="1" height="1" fill="#000000"/><rect x="1" y="12" width="3" height="1" fill="#9090FF"/><rect x="4" y="12" width="2" height="1" fill="#3030A0"/><rect x="6" y="12" width="1" height="1" fill="#000000"/><rect x="7" y="12" width="4" height="1" fill="#E04040"/><rect x="11" y="12" width="3" height="1" fill="#A00000"/><rect x="14" y="12" width="1" height="1" fill="#000000"/><rect x="0" y="13" width="1" height="1" fill="#000000"/><rect x="1" y="13" width="3" height="1" fill="#9090FF"/><rect x="4" y="13" width="2" height="1" fill="#3030A0"/><rect x="6" y="13" width="1" height="1" fill="#000000"/><rect x="7" y="13" width="3" height="1" fill="#E04040"/><rect x="10" y="13" width="3" height="1" fill="#A00000"/><rect x="13" y="13" width="1" height="1" fill="#000000"/><rect x="1" y="14" width="12" height="1" fill="#000000"/></svg>
<div class="m" style="left:23px;top:217px;color:#000">ksocketd</div>
<div class="m" style="left:-3px;width:200px;text-align:right;top:216px">106</div>
<div class="m" style="left:77px;width:200px;text-align:right;top:216px">1</div>
<div class="m" style="left:110px;width:200px;text-align:right;top:216px">0.0</div>
<div class="m" style="left:316px;top:216px">%</div>
<div style="position:absolute;left:324px;top:215px;width:67px;height:11px;box-sizing:border-box;border:1px solid #000;background:#FFF"><div style="width:0px;height:9px;background:#00C400"></div></div>
<div class="m" style="left:223px;width:200px;text-align:right;top:216px">3.2</div>
<div class="m" style="left:429px;top:216px">%</div>
<div style="position:absolute;left:437px;top:215px;width:58px;height:11px;box-sizing:border-box;border:1px solid #000;background:#FFF"><div style="width:3px;height:9px;background:#0000D0"></div></div>
<div class="m" style="left:499px;top:217px">/boot/beos/bin/ksocketd</div>
<svg style="position:absolute;left:3px;top:234px" width="17" height="14" shape-rendering="crispEdges"><rect x="9" y="0" width="1" height="1" fill="#000000"/><rect x="7" y="1" width="4" height="1" fill="#000000"/><rect x="12" y="1" width="1" height="1" fill="#000000"/><rect x="6" y="2" width="1" height="1" fill="#000000"/><rect x="7" y="2" width="4" height="1" fill="#FFFFFF"/><rect x="11" y="2" width="1" height="1" fill="#000000"/><rect x="12" y="2" width="1" height="1" fill="#FFFFFF"/><rect x="13" y="2" width="2" height="1" fill="#000000"/><rect x="4" y="3" width="2" height="1" fill="#000000"/><rect x="6" y="3" width="1" height="1" fill="#FFFFFF"/><rect x="7" y="3" width="1" height="1" fill="#9090FF"/><rect x="8" y="3" width="4" height="1" fill="#FFFFFF"/><rect x="12" y="3" width="1" height="1" fill="#000000"/><rect x="13" y="3" width="2" height="1" fill="#F4C88C"/><rect x="15" y="3" width="1" height="1" fill="#000000"/><rect x="3" y="4" width="1" height="1" fill="#000000"/><rect x="4" y="4" width="1" height="1" fill="#F4C88C"/><rect x="5" y="4" width="1" height="1" fill="#000000"/><rect x="6" y="4" width="1" height="1" fill="#FFFFFF"/><rect x="7" y="4" width="2" height="1" fill="#9090FF"/><rect x="9" y="4" width="2" height="1" fill="#FFFFFF"/><rect x="11" y="4" width="1" height="1" fill="#B8B8B8"/><rect x="12" y="4" width="1" height="1" fill="#000000"/><rect x="13" y="4" width="2" height="1" fill="#F4C88C"/><rect x="15" y="4" width="1" height="1" fill="#C07838"/><rect x="16" y="4" width="1" height="1" fill="#000000"/><rect x="4" y="5" width="2" height="1" fill="#000000"/><rect x="6" y="5" width="1" height="1" fill="#FFFFFF"/><rect x="7" y="5" width="2" height="1" fill="#9090FF"/><rect x="9" y="5" width="1" height="1" fill="#3030A0"/><rect x="10" y="5" width="1" height="1" fill="#FFFFFF"/><rect x="11" y="5" width="1" height="1" fill="#B8B8B8"/><rect x="12" y="5" width="1" height="1" fill="#707070"/><rect x="13" y="5" width="1" height="1" fill="#000000"/><rect x="14" y="5" width="1" height="1" fill="#C07838"/><rect x="15" y="5" width="1" height="1" fill="#000000"/><rect x="5" y="6" width="1" height="1" fill="#000000"/><rect x="6" y="6" width="2" height="1" fill="#FFFFFF"/><rect x="8" y="6" width="2" height="1" fill="#3030A0"/><rect x="10" y="6" width="1" height="1" fill="#FFFFFF"/><rect x="11" y="6" width="1" height="1" fill="#B8B8B8"/><rect x="12" y="6" width="1" height="1" fill="#707070"/><rect x="13" y="6" width="1" height="1" fill="#000000"/><rect x="14" y="6" width="1" height="1" fill="#C07838"/><rect x="15" y="6" width="1" height="1" fill="#000000"/><rect x="4" y="7" width="3" height="1" fill="#000000"/><rect x="7" y="7" width="2" height="1" fill="#FFFFFF"/><rect x="9" y="7" width="1" height="1" fill="#E04040"/><rect x="10" y="7" width="1" height="1" fill="#3030A0"/><rect x="11" y="7" width="1" height="1" fill="#B8B8B8"/><rect x="12" y="7" width="1" height="1" fill="#707070"/><rect x="13" y="7" width="2" height="1" fill="#000000"/><rect x="3" y="8" width="1" height="1" fill="#000000"/><rect x="4" y="8" width="2" height="1" fill="#F4C88C"/><rect x="6" y="8" width="3" height="1" fill="#000000"/><rect x="9" y="8" width="2" height="1" fill="#B8B8B8"/><rect x="11" y="8" width="1" height="1" fill="#707070"/><rect x="12" y="8" width="1" height="1" fill="#B8B8B8"/><rect x="13" y="8" width="1" height="1" fill="#000000"/><rect x="2" y="9" width="9" height="1" fill="#000000"/><rect x="11" y="9" width="1" height="1" fill="#707070"/><rect x="12" y="9" width="1" height="1" fill="#000000"/><rect x="1" y="10" width="1" height="1" fill="#000000"/><rect x="2" y="10" width="1" height="1" fill="#F4C88C"/><rect x="3" y="10" width="1" height="1" fill="#000000"/><rect x="4" y="10" width="4" height="1" fill="#FFE000"/><rect x="8" y="10" width="1" height="1" fill="#000000"/><rect x="9" y="10" width="1" height="1" fill="#F4C88C"/><rect x="10" y="10" width="2" height="1" fill="#000000"/><rect x="0" y="11" width="1" height="1" fill="#000000"/><rect x="1" y="11" width="2" height="1" fill="#F4C88C"/><rect x="3" y="11" width="2" height="1" fill="#000000"/><rect x="5" y="11" width="1" height="1" fill="#FFE000"/><rect x="6" y="11" width="2" height="1" fill="#000000"/><rect x="8" y="11" width="3" height="1" fill="#F4C88C"/><rect x="11" y="11" width="1" height="1" fill="#000000"/><rect x="1" y="12" width="1" height="1" fill="#000000"/><rect x="2" y="12" width="1" height="1" fill="#F4C88C"/><rect x="3" y="12" width="1" height="1" fill="#000000"/><rect x="4" y="12" width="2" height="1" fill="#FFE000"/><rect x="6" y="12" width="3" height="1" fill="#000000"/><rect x="9" y="12" width="1" height="1" fill="#F4C88C"/><rect x="10" y="12" width="1" height="1" fill="#000000"/><rect x="2" y="13" width="8" height="1" fill="#000000"/></svg>
<div class="m" style="left:23px;top:238px;color:#0000F0">media_addon_server</div>
<div class="m" style="left:-3px;width:200px;text-align:right;top:237px">43</div>
<div class="m" style="left:77px;width:200px;text-align:right;top:237px">12</div>
<div class="m" style="left:110px;width:200px;text-align:right;top:237px">0.4</div>
<div class="m" style="left:316px;top:237px">%</div>
<div style="position:absolute;left:324px;top:236px;width:67px;height:11px;box-sizing:border-box;border:1px solid #000;background:#FFF"><div style="width:0px;height:9px;background:#00C400"></div></div>
<div class="m" style="left:223px;width:200px;text-align:right;top:237px">9.6</div>
<div class="m" style="left:429px;top:237px">%</div>
<div style="position:absolute;left:437px;top:236px;width:58px;height:11px;box-sizing:border-box;border:1px solid #000;background:#FFF"><div style="width:7px;height:9px;background:#0000D0"></div></div>
<div class="m" style="left:499px;top:238px">/boot/beos/system/servers</div>
</div>
<div style="position:absolute;left:699px;top:136px;width:15px;height:267px;background:#C4C4C4"></div>
<div style="position:absolute;left:699px;top:136px;width:1px;height:267px;background:#989898"></div>
<div style="position:absolute;left:699px;top:374px;width:15px;height:14px;background:#D8D8D8"></div>
<div style="position:absolute;left:699px;top:374px;width:15px;height:1px;background:#FFFFFF"></div>
<div style="position:absolute;left:699px;top:374px;width:1px;height:14px;background:#FFFFFF"></div>
<div style="position:absolute;left:713px;top:374px;width:1px;height:14px;background:#989898"></div>
<div style="position:absolute;left:699px;top:387px;width:15px;height:1px;background:#989898"></div>
<div style="position:absolute;left:699px;top:388px;width:15px;height:15px;background:#D8D8D8"></div>
<div style="position:absolute;left:699px;top:388px;width:15px;height:1px;background:#FFFFFF"></div>
<div style="position:absolute;left:699px;top:388px;width:1px;height:15px;background:#FFFFFF"></div>
<div style="position:absolute;left:713px;top:388px;width:1px;height:15px;background:#989898"></div>
<div style="position:absolute;left:699px;top:402px;width:15px;height:1px;background:#989898"></div>
<svg style="position:absolute;left:699px;top:374px" width="15" height="29"><path d="M7.5 3.5L11.5 10.5H3.5Z" fill="none" stroke="#888"/><path d="M3.5 17.5H11.5L7.5 24.5Z" fill="none" stroke="#888"/></svg>
<div style="position:absolute;left:139px;top:403px;width:560px;height:14px;background:#D8D8D8"></div>
<div style="position:absolute;left:139px;top:403px;width:560px;height:1px;background:#989898"></div>
<div style="position:absolute;left:139px;top:404px;width:14px;height:13px;background:#D8D8D8"></div>
<div style="position:absolute;left:139px;top:404px;width:14px;height:1px;background:#FFFFFF"></div>
<div style="position:absolute;left:139px;top:404px;width:1px;height:13px;background:#FFFFFF"></div>
<div style="position:absolute;left:152px;top:404px;width:1px;height:13px;background:#989898"></div>
<div style="position:absolute;left:139px;top:416px;width:14px;height:1px;background:#989898"></div>
<div style="position:absolute;left:153px;top:404px;width:1px;height:13px;background:#989898"></div>
<div style="position:absolute;left:154px;top:404px;width:15px;height:13px;background:#D8D8D8"></div>
<div style="position:absolute;left:154px;top:404px;width:15px;height:1px;background:#FFFFFF"></div>
<div style="position:absolute;left:154px;top:404px;width:1px;height:13px;background:#FFFFFF"></div>
<div style="position:absolute;left:168px;top:404px;width:1px;height:13px;background:#989898"></div>
<div style="position:absolute;left:154px;top:416px;width:15px;height:1px;background:#989898"></div>
<div style="position:absolute;left:169px;top:404px;width:402px;height:13px;background:#D8D8D8"></div>
<div style="position:absolute;left:169px;top:404px;width:402px;height:1px;background:#FFFFFF"></div>
<div style="position:absolute;left:169px;top:404px;width:1px;height:13px;background:#FFFFFF"></div>
<div style="position:absolute;left:570px;top:404px;width:1px;height:13px;background:#989898"></div>
<div style="position:absolute;left:360px;top:408px;width:5px;height:5px;background:#FFFFFF"></div>
<div style="position:absolute;left:361px;top:409px;width:4px;height:4px;background:#A8A8A8"></div>
<div style="position:absolute;left:361px;top:409px;width:3px;height:3px;background:#D8D8D8"></div>
<div style="position:absolute;left:367px;top:408px;width:5px;height:5px;background:#FFFFFF"></div>
<div style="position:absolute;left:368px;top:409px;width:4px;height:4px;background:#A8A8A8"></div>
<div style="position:absolute;left:368px;top:409px;width:3px;height:3px;background:#D8D8D8"></div>
<div style="position:absolute;left:374px;top:408px;width:5px;height:5px;background:#FFFFFF"></div>
<div style="position:absolute;left:375px;top:409px;width:4px;height:4px;background:#A8A8A8"></div>
<div style="position:absolute;left:375px;top:409px;width:3px;height:3px;background:#D8D8D8"></div>
<div style="position:absolute;left:571px;top:404px;width:99px;height:13px;background:#C4C4C4"></div>
<div style="position:absolute;left:670px;top:404px;width:15px;height:13px;background:#D8D8D8"></div>
<div style="position:absolute;left:670px;top:404px;width:15px;height:1px;background:#FFFFFF"></div>
<div style="position:absolute;left:670px;top:404px;width:1px;height:13px;background:#FFFFFF"></div>
<div style="position:absolute;left:684px;top:404px;width:1px;height:13px;background:#989898"></div>
<div style="position:absolute;left:670px;top:416px;width:15px;height:1px;background:#989898"></div>
<div style="position:absolute;left:685px;top:404px;width:14px;height:13px;background:#D8D8D8"></div>
<div style="position:absolute;left:685px;top:404px;width:14px;height:1px;background:#FFFFFF"></div>
<div style="position:absolute;left:685px;top:404px;width:1px;height:13px;background:#FFFFFF"></div>
<div style="position:absolute;left:698px;top:404px;width:1px;height:13px;background:#989898"></div>
<div style="position:absolute;left:685px;top:416px;width:14px;height:1px;background:#989898"></div>
<svg style="position:absolute;left:138px;top:403px" width="561" height="14"><path d="M4.5 7.5L11.5 3.5V11.5Z" fill="none" stroke="#888"/><path d="M19.5 3.5L26.5 7.5L19.5 11.5Z" fill="none" stroke="#888"/><path d="M535.5 7.5L542.5 3.5V11.5Z" fill="none" stroke="#888"/><path d="M550.5 3.5L557.5 7.5L550.5 11.5Z" fill="none" stroke="#888"/></svg>
<div style="position:absolute;left:699px;top:403px;width:15px;height:14px;background:#D8D8D8"></div>
<div style="position:absolute;left:140px;top:427px;width:89px;height:22px;box-sizing:border-box;border:1px solid #606060;border-radius:2px;background:#EEEEEE;box-shadow:inset -1px -1px 0 #8C8C8C,inset -2px -2px 0 #C4C4C4,inset 3px 3px 0 #FFFFFF"></div>
<div class="m" style="left:160px;top:435px;font-size:10px;line-height:10px;letter-spacing:-0.4px">X-Kill...</div>
<div style="position:absolute;left:626px;top:427px;width:89px;height:22px;box-sizing:border-box;border:1px solid #606060;border-radius:2px;background:#EEEEEE;box-shadow:inset -1px -1px 0 #8C8C8C,inset -2px -2px 0 #C4C4C4,inset 3px 3px 0 #FFFFFF"></div>

<div class="t" style="left:648px;top:432px;color:#000;">強制終了</div>
<div style="position:absolute;left:216px;top:259px;width:6px;height:104px;background:linear-gradient(to right,rgba(0,0,0,.46),rgba(0,0,0,.02));clip-path:polygon(0 0,3px 0,6px 3px,6px 100%,0 100%)"></div>
<div style="position:absolute;left:5px;top:363px;width:121px;height:6px;background:#F2F2F2;clip-path:polygon(0 0,100% 0,100% 3px,calc(100% - 3px) 100%,3px 100%,0 3px)"></div>
<div style="position:absolute;left:5px;top:363px;width:217px;height:6px;background:linear-gradient(to bottom,rgba(0,0,0,.46),rgba(0,0,0,.02));clip-path:polygon(0 0,100% 0,100% 3px,calc(100% - 3px) 100%,3px 100%,0 3px)"></div>
<div style="position:absolute;left:5px;top:258px;width:211px;height:105px;box-sizing:border-box;border-style:solid;border-width:1px;border-color:#989898 #606060 #606060 #989898;"><div style="width:100%;height:100%;box-sizing:border-box;border-style:solid;border-width:1px;border-color:#FFFFFF #888888 #888888 #FFFFFF;"><div style="width:100%;height:100%;box-sizing:border-box;border-style:solid;border-width:1px;border-color:#D8D8D8 #D8D8D8 #D8D8D8 #D8D8D8;"><div style="width:100%;height:100%;box-sizing:border-box;border-style:solid;border-width:1px;border-color:#888888 #FFFFFF #FFFFFF #888888;"><div style="width:100%;height:100%;box-sizing:border-box;border-style:solid;border-width:1px;border-color:#606060 #989898 #989898 #606060;"><div style="width:100%;height:100%;background:#DEDEDE"></div></div></div></div></div></div>
<div style="position:absolute;left:5px;top:239px;width:127px;height:20px;box-sizing:border-box;background:#FFCB00;border-top:1px solid #989898;border-left:1px solid #989898;border-right:1px solid #606060;"><div style="position:absolute;left:0;top:0;right:0;bottom:0;border-top:1px solid #FFF07A;border-left:1px solid #FFF07A;border-right:1px solid #D9A300"></div></div>
<div style="position:absolute;left:132px;top:240px;width:6px;height:19px;background:linear-gradient(to right,rgba(0,0,0,.46),rgba(0,0,0,.02));clip-path:polygon(0 0,3px 0,6px 3px,6px 100%,0 100%)"></div>
<div style="position:absolute;left:9px;top:243px;width:14px;height:14px;box-sizing:border-box;border:1px solid;border-color:#B88A00 #FFFF70 #FFFF70 #B88A00;"><div style="width:100%;height:100%;box-sizing:border-box;border:1px solid;border-color:#FFFF70 #B88A00 #B88A00 #FFFF70;background:linear-gradient(135deg,#FFFAA0,#FFE040 45%,#F0C000 75%,#E8B000)"></div></div>

<div class="t" style="left:42px;top:243px;color:#000;-webkit-text-stroke:0.45px #000">チームの選択</div>
<div class="t" style="left:16px;top:269px;color:#000;">照準をウィンドウにドラッグする</div>
<div class="t" style="left:16px;top:281px;color:#000;">と<span style="display:inline-block;width:12px">.</span>そのウィンドウのアプリケー</div>
<div class="t" style="left:16px;top:294px;color:#000;">ションを終了させます<span style="display:inline-block;width:12px">.</span></div>
<div style="position:absolute;left:95px;top:317px;width:31px;height:32px;box-sizing:border-box;border:2px solid;border-color:#888 #FFF #FFF #888;background:#F8F8F8"></div>
<svg style="position:absolute;left:95px;top:317px" width="31" height="32"><circle cx="15.5" cy="15.5" r="8" fill="none" stroke="#000"/><circle cx="15.5" cy="15.5" r="3" fill="none" stroke="#000"/><path d="M3 15.5H28M15.5 3V28" stroke="#000"/></svg>
<div style="position:absolute;left:216px;top:259px;width:8px;height:100px;overflow:hidden">
<div class="m" style="left:-55px;top:7px;color:#000">dhcp_client</div>
<div class="m" style="left:-55px;top:28px;color:#0000F0">media_server</div>
<div class="m" style="left:-55px;top:49px;color:#0000F0">kernel_team</div>
</div>
<div style="position:absolute;left:856px;top:25px;width:6px;height:316px;background:linear-gradient(to right,rgba(0,0,0,.46),rgba(0,0,0,.02)),linear-gradient(#F2F2F2,#F2F2F2);clip-path:polygon(0 0,3px 0,6px 3px,6px 100%,0 100%)"></div>
<div style="position:absolute;left:729px;top:341px;width:133px;height:6px;background:#F2F2F2;clip-path:polygon(0 0,100% 0,100% 3px,calc(100% - 3px) 100%,3px 100%,0 3px)"></div>
<div style="position:absolute;left:555px;top:341px;width:307px;height:6px;background:linear-gradient(to bottom,rgba(0,0,0,.46),rgba(0,0,0,.02));clip-path:polygon(0 0,100% 0,100% 3px,calc(100% - 3px) 100%,3px 100%,0 3px)"></div>
<div style="position:absolute;left:554px;top:8px;width:1px;height:79px;background:#E4E4E4"></div>
<div style="position:absolute;left:555px;top:24px;width:301px;height:317px;box-sizing:border-box;border-style:solid;border-width:1px;border-color:#989898 #606060 #606060 #989898;"><div style="width:100%;height:100%;box-sizing:border-box;border-style:solid;border-width:1px;border-color:#FFFFFF #888888 #888888 #FFFFFF;"><div style="width:100%;height:100%;box-sizing:border-box;border-style:solid;border-width:1px;border-color:#D8D8D8 #D8D8D8 #D8D8D8 #D8D8D8;"><div style="width:100%;height:100%;box-sizing:border-box;border-style:solid;border-width:1px;border-color:#888888 #FFFFFF #FFFFFF #888888;"><div style="width:100%;height:100%;box-sizing:border-box;border-style:solid;border-width:1px;border-color:#606060 #989898 #989898 #606060;"><div style="width:100%;height:100%;background:#DEDEDE"></div></div></div></div></div></div>
<div style="position:absolute;left:555px;top:5px;width:78px;height:20px;box-sizing:border-box;background:#FFCB00;border-top:1px solid #989898;border-left:1px solid #989898;border-right:1px solid #606060;"><div style="position:absolute;left:0;top:0;right:0;bottom:0;border-top:1px solid #FFF07A;border-left:1px solid #FFF07A;border-right:1px solid #D9A300"></div></div>
<div style="position:absolute;left:633px;top:6px;width:6px;height:19px;background:linear-gradient(to right,rgba(0,0,0,.46),rgba(0,0,0,.02)),linear-gradient(#F2F2F2,#F2F2F2);clip-path:polygon(0 0,3px 0,6px 3px,6px 100%,0 100%)"></div>
<div style="position:absolute;left:559px;top:9px;width:14px;height:14px;box-sizing:border-box;border:1px solid;border-color:#B88A00 #FFFF70 #FFFF70 #B88A00;"><div style="width:100%;height:100%;box-sizing:border-box;border:1px solid;border-color:#FFFF70 #B88A00 #B88A00 #FFFF70;background:linear-gradient(135deg,#FFFAA0,#FFE040 45%,#F0C000 75%,#E8B000)"></div></div>

<div class="t" style="left:592px;top:9px;color:#000;"><b>設定</b></div>
<div style="position:absolute;left:570px;top:39px;width:271px;height:71px;box-sizing:border-box;border:1px solid #989898;box-shadow:1px 1px 0 #FFF, inset 1px 1px 0 #FFF"></div>
<div style="position:absolute;left:583px;top:54px;width:14px;height:14px;box-sizing:border-box;border:1px solid;border-color:#B8B8B8 #FFFFFF #FFFFFF #B8B8B8;"><div style="width:100%;height:100%;box-sizing:border-box;border:1px solid;border-color:#606060 #D8D8D8 #D8D8D8 #606060;background:#FFF"></div></div>
<svg style="position:absolute;left:586px;top:57px" width="7" height="7" fill="#0000E8" shape-rendering="crispEdges"><rect x="0" y="0" width="1" height="1"/><rect x="1" y="0" width="1" height="1"/><rect x="5" y="0" width="1" height="1"/><rect x="6" y="0" width="1" height="1"/><rect x="0" y="1" width="1" height="1"/><rect x="1" y="1" width="1" height="1"/><rect x="2" y="1" width="1" height="1"/><rect x="4" y="1" width="1" height="1"/><rect x="5" y="1" width="1" height="1"/><rect x="6" y="1" width="1" height="1"/><rect x="1" y="2" width="1" height="1"/><rect x="2" y="2" width="1" height="1"/><rect x="3" y="2" width="1" height="1"/><rect x="4" y="2" width="1" height="1"/><rect x="5" y="2" width="1" height="1"/><rect x="2" y="3" width="1" height="1"/><rect x="3" y="3" width="1" height="1"/><rect x="4" y="3" width="1" height="1"/><rect x="1" y="4" width="1" height="1"/><rect x="2" y="4" width="1" height="1"/><rect x="3" y="4" width="1" height="1"/><rect x="4" y="4" width="1" height="1"/><rect x="5" y="4" width="1" height="1"/><rect x="0" y="5" width="1" height="1"/><rect x="1" y="5" width="1" height="1"/><rect x="2" y="5" width="1" height="1"/><rect x="4" y="5" width="1" height="1"/><rect x="5" y="5" width="1" height="1"/><rect x="6" y="5" width="1" height="1"/><rect x="0" y="6" width="1" height="1"/><rect x="1" y="6" width="1" height="1"/><rect x="5" y="6" width="1" height="1"/><rect x="6" y="6" width="1" height="1"/></svg>
<div class="t" style="left:602px;top:54px;color:#000;">終了時にデスクバーレプリカントを残す</div>
<div style="position:absolute;left:583px;top:82px;width:14px;height:14px;box-sizing:border-box;border:1px solid;border-color:#B8B8B8 #FFFFFF #FFFFFF #B8B8B8;"><div style="width:100%;height:100%;box-sizing:border-box;border:1px solid;border-color:#606060 #D8D8D8 #D8D8D8 #606060;background:#FFF"></div></div>
<div class="t" style="left:602px;top:82px;color:#000;">システムのチームを非表示</div>
<div style="position:absolute;left:570px;top:126px;width:271px;height:155px;box-sizing:border-box;border:1px solid #989898;box-shadow:1px 1px 0 #FFF, inset 1px 1px 0 #FFF"></div>
<div style="position:absolute;left:576px;top:120px;width:58px;height:11px;background:#DEDEDE"></div>
<div class="t" style="left:580px;top:119px;color:#000;">表示項目</div>
<div style="position:absolute;left:583px;top:142px;width:14px;height:14px;box-sizing:border-box;border:1px solid;border-color:#B8B8B8 #FFFFFF #FFFFFF #B8B8B8;"><div style="width:100%;height:100%;box-sizing:border-box;border:1px solid;border-color:#606060 #D8D8D8 #D8D8D8 #606060;background:#FFF"></div></div>
<svg style="position:absolute;left:586px;top:145px" width="7" height="7" fill="#0000E8" shape-rendering="crispEdges"><rect x="0" y="0" width="1" height="1"/><rect x="1" y="0" width="1" height="1"/><rect x="5" y="0" width="1" height="1"/><rect x="6" y="0" width="1" height="1"/><rect x="0" y="1" width="1" height="1"/><rect x="1" y="1" width="1" height="1"/><rect x="2" y="1" width="1" height="1"/><rect x="4" y="1" width="1" height="1"/><rect x="5" y="1" width="1" height="1"/><rect x="6" y="1" width="1" height="1"/><rect x="1" y="2" width="1" height="1"/><rect x="2" y="2" width="1" height="1"/><rect x="3" y="2" width="1" height="1"/><rect x="4" y="2" width="1" height="1"/><rect x="5" y="2" width="1" height="1"/><rect x="2" y="3" width="1" height="1"/><rect x="3" y="3" width="1" height="1"/><rect x="4" y="3" width="1" height="1"/><rect x="1" y="4" width="1" height="1"/><rect x="2" y="4" width="1" height="1"/><rect x="3" y="4" width="1" height="1"/><rect x="4" y="4" width="1" height="1"/><rect x="5" y="4" width="1" height="1"/><rect x="0" y="5" width="1" height="1"/><rect x="1" y="5" width="1" height="1"/><rect x="2" y="5" width="1" height="1"/><rect x="4" y="5" width="1" height="1"/><rect x="5" y="5" width="1" height="1"/><rect x="6" y="5" width="1" height="1"/><rect x="0" y="6" width="1" height="1"/><rect x="1" y="6" width="1" height="1"/><rect x="5" y="6" width="1" height="1"/><rect x="6" y="6" width="1" height="1"/></svg>
<div class="t" style="left:602px;top:142px;color:#000;">名称</div>
<div style="position:absolute;left:711px;top:142px;width:14px;height:14px;box-sizing:border-box;border:1px solid;border-color:#B8B8B8 #FFFFFF #FFFFFF #B8B8B8;"><div style="width:100%;height:100%;box-sizing:border-box;border:1px solid;border-color:#606060 #D8D8D8 #D8D8D8 #606060;background:#FFF"></div></div>
<svg style="position:absolute;left:714px;top:145px" width="7" height="7" fill="#0000E8" shape-rendering="crispEdges"><rect x="0" y="0" width="1" height="1"/><rect x="1" y="0" width="1" height="1"/><rect x="5" y="0" width="1" height="1"/><rect x="6" y="0" width="1" height="1"/><rect x="0" y="1" width="1" height="1"/><rect x="1" y="1" width="1" height="1"/><rect x="2" y="1" width="1" height="1"/><rect x="4" y="1" width="1" height="1"/><rect x="5" y="1" width="1" height="1"/><rect x="6" y="1" width="1" height="1"/><rect x="1" y="2" width="1" height="1"/><rect x="2" y="2" width="1" height="1"/><rect x="3" y="2" width="1" height="1"/><rect x="4" y="2" width="1" height="1"/><rect x="5" y="2" width="1" height="1"/><rect x="2" y="3" width="1" height="1"/><rect x="3" y="3" width="1" height="1"/><rect x="4" y="3" width="1" height="1"/><rect x="1" y="4" width="1" height="1"/><rect x="2" y="4" width="1" height="1"/><rect x="3" y="4" width="1" height="1"/><rect x="4" y="4" width="1" height="1"/><rect x="5" y="4" width="1" height="1"/><rect x="0" y="5" width="1" height="1"/><rect x="1" y="5" width="1" height="1"/><rect x="2" y="5" width="1" height="1"/><rect x="4" y="5" width="1" height="1"/><rect x="5" y="5" width="1" height="1"/><rect x="6" y="5" width="1" height="1"/><rect x="0" y="6" width="1" height="1"/><rect x="1" y="6" width="1" height="1"/><rect x="5" y="6" width="1" height="1"/><rect x="6" y="6" width="1" height="1"/></svg>
<div class="t" style="left:730px;top:142px;color:#000;">チーム<span style="display:inline-block;margin-left:-2px;font-family:Liberation Sans;font-size:9px;letter-spacing:0.5px;-webkit-text-stroke:0.1px #000;transform:scaleY(1.15);transform-origin:0 70%">ID</span></div>
<div style="position:absolute;left:583px;top:170px;width:14px;height:14px;box-sizing:border-box;border:1px solid;border-color:#B8B8B8 #FFFFFF #FFFFFF #B8B8B8;"><div style="width:100%;height:100%;box-sizing:border-box;border:1px solid;border-color:#606060 #D8D8D8 #D8D8D8 #606060;background:#FFF"></div></div>
<svg style="position:absolute;left:586px;top:173px" width="7" height="7" fill="#0000E8" shape-rendering="crispEdges"><rect x="0" y="0" width="1" height="1"/><rect x="1" y="0" width="1" height="1"/><rect x="5" y="0" width="1" height="1"/><rect x="6" y="0" width="1" height="1"/><rect x="0" y="1" width="1" height="1"/><rect x="1" y="1" width="1" height="1"/><rect x="2" y="1" width="1" height="1"/><rect x="4" y="1" width="1" height="1"/><rect x="5" y="1" width="1" height="1"/><rect x="6" y="1" width="1" height="1"/><rect x="1" y="2" width="1" height="1"/><rect x="2" y="2" width="1" height="1"/><rect x="3" y="2" width="1" height="1"/><rect x="4" y="2" width="1" height="1"/><rect x="5" y="2" width="1" height="1"/><rect x="2" y="3" width="1" height="1"/><rect x="3" y="3" width="1" height="1"/><rect x="4" y="3" width="1" height="1"/><rect x="1" y="4" width="1" height="1"/><rect x="2" y="4" width="1" height="1"/><rect x="3" y="4" width="1" height="1"/><rect x="4" y="4" width="1" height="1"/><rect x="5" y="4" width="1" height="1"/><rect x="0" y="5" width="1" height="1"/><rect x="1" y="5" width="1" height="1"/><rect x="2" y="5" width="1" height="1"/><rect x="4" y="5" width="1" height="1"/><rect x="5" y="5" width="1" height="1"/><rect x="6" y="5" width="1" height="1"/><rect x="0" y="6" width="1" height="1"/><rect x="1" y="6" width="1" height="1"/><rect x="5" y="6" width="1" height="1"/><rect x="6" y="6" width="1" height="1"/></svg>
<div class="t" style="left:602px;top:170px;color:#000;">スレッド数</div>
<div style="position:absolute;left:711px;top:170px;width:14px;height:14px;box-sizing:border-box;border:1px solid;border-color:#B8B8B8 #FFFFFF #FFFFFF #B8B8B8;"><div style="width:100%;height:100%;box-sizing:border-box;border:1px solid;border-color:#606060 #D8D8D8 #D8D8D8 #606060;background:#FFF"></div></div>
<div class="t" style="left:730px;top:170px;color:#000;">エリア数</div>
<div style="position:absolute;left:583px;top:198px;width:14px;height:14px;box-sizing:border-box;border:1px solid;border-color:#B8B8B8 #FFFFFF #FFFFFF #B8B8B8;"><div style="width:100%;height:100%;box-sizing:border-box;border:1px solid;border-color:#606060 #D8D8D8 #D8D8D8 #606060;background:#FFF"></div></div>
<div class="t" style="left:602px;top:198px;color:#000;">イメージ数</div>
<div style="position:absolute;left:711px;top:198px;width:14px;height:14px;box-sizing:border-box;border:1px solid;border-color:#B8B8B8 #FFFFFF #FFFFFF #B8B8B8;"><div style="width:100%;height:100%;box-sizing:border-box;border:1px solid;border-color:#606060 #D8D8D8 #D8D8D8 #606060;background:#FFF"></div></div>
<svg style="position:absolute;left:714px;top:201px" width="7" height="7" fill="#0000E8" shape-rendering="crispEdges"><rect x="0" y="0" width="1" height="1"/><rect x="1" y="0" width="1" height="1"/><rect x="5" y="0" width="1" height="1"/><rect x="6" y="0" width="1" height="1"/><rect x="0" y="1" width="1" height="1"/><rect x="1" y="1" width="1" height="1"/><rect x="2" y="1" width="1" height="1"/><rect x="4" y="1" width="1" height="1"/><rect x="5" y="1" width="1" height="1"/><rect x="6" y="1" width="1" height="1"/><rect x="1" y="2" width="1" height="1"/><rect x="2" y="2" width="1" height="1"/><rect x="3" y="2" width="1" height="1"/><rect x="4" y="2" width="1" height="1"/><rect x="5" y="2" width="1" height="1"/><rect x="2" y="3" width="1" height="1"/><rect x="3" y="3" width="1" height="1"/><rect x="4" y="3" width="1" height="1"/><rect x="1" y="4" width="1" height="1"/><rect x="2" y="4" width="1" height="1"/><rect x="3" y="4" width="1" height="1"/><rect x="4" y="4" width="1" height="1"/><rect x="5" y="4" width="1" height="1"/><rect x="0" y="5" width="1" height="1"/><rect x="1" y="5" width="1" height="1"/><rect x="2" y="5" width="1" height="1"/><rect x="4" y="5" width="1" height="1"/><rect x="5" y="5" width="1" height="1"/><rect x="6" y="5" width="1" height="1"/><rect x="0" y="6" width="1" height="1"/><rect x="1" y="6" width="1" height="1"/><rect x="5" y="6" width="1" height="1"/><rect x="6" y="6" width="1" height="1"/></svg>
<div class="t" style="left:730px;top:198px;color:#000;"><span style="display:inline-block;font-family:Liberation Mono;font-size:9px;letter-spacing:0;-webkit-text-stroke:0.1px #000;transform:scaleY(1.2);transform-origin:0 70%">CPU</span>使用状況</div>
<div style="position:absolute;left:583px;top:226px;width:14px;height:14px;box-sizing:border-box;border:1px solid;border-color:#B8B8B8 #FFFFFF #FFFFFF #B8B8B8;"><div style="width:100%;height:100%;box-sizing:border-box;border:1px solid;border-color:#606060 #D8D8D8 #D8D8D8 #606060;background:#FFF"></div></div>
<svg style="position:absolute;left:586px;top:229px" width="7" height="7" fill="#0000E8" shape-rendering="crispEdges"><rect x="0" y="0" width="1" height="1"/><rect x="1" y="0" width="1" height="1"/><rect x="5" y="0" width="1" height="1"/><rect x="6" y="0" width="1" height="1"/><rect x="0" y="1" width="1" height="1"/><rect x="1" y="1" width="1" height="1"/><rect x="2" y="1" width="1" height="1"/><rect x="4" y="1" width="1" height="1"/><rect x="5" y="1" width="1" height="1"/><rect x="6" y="1" width="1" height="1"/><rect x="1" y="2" width="1" height="1"/><rect x="2" y="2" width="1" height="1"/><rect x="3" y="2" width="1" height="1"/><rect x="4" y="2" width="1" height="1"/><rect x="5" y="2" width="1" height="1"/><rect x="2" y="3" width="1" height="1"/><rect x="3" y="3" width="1" height="1"/><rect x="4" y="3" width="1" height="1"/><rect x="1" y="4" width="1" height="1"/><rect x="2" y="4" width="1" height="1"/><rect x="3" y="4" width="1" height="1"/><rect x="4" y="4" width="1" height="1"/><rect x="5" y="4" width="1" height="1"/><rect x="0" y="5" width="1" height="1"/><rect x="1" y="5" width="1" height="1"/><rect x="2" y="5" width="1" height="1"/><rect x="4" y="5" width="1" height="1"/><rect x="5" y="5" width="1" height="1"/><rect x="6" y="5" width="1" height="1"/><rect x="0" y="6" width="1" height="1"/><rect x="1" y="6" width="1" height="1"/><rect x="5" y="6" width="1" height="1"/><rect x="6" y="6" width="1" height="1"/></svg>
<div class="t" style="left:602px;top:226px;color:#000;">メモリ使用率（<span style="font-family:Liberation Mono;font-size:10px">%</span>）</div>
<div style="position:absolute;left:711px;top:226px;width:14px;height:14px;box-sizing:border-box;border:1px solid;border-color:#B8B8B8 #FFFFFF #FFFFFF #B8B8B8;"><div style="width:100%;height:100%;box-sizing:border-box;border:1px solid;border-color:#606060 #D8D8D8 #D8D8D8 #606060;background:#FFF"></div></div>
<div class="t" style="left:730px;top:226px;color:#000;">メモリ使用量</div>
<div style="position:absolute;left:583px;top:254px;width:14px;height:14px;box-sizing:border-box;border:1px solid;border-color:#B8B8B8 #FFFFFF #FFFFFF #B8B8B8;"><div style="width:100%;height:100%;box-sizing:border-box;border:1px solid;border-color:#606060 #D8D8D8 #D8D8D8 #606060;background:#FFF"></div></div>
<svg style="position:absolute;left:586px;top:257px" width="7" height="7" fill="#0000E8" shape-rendering="crispEdges"><rect x="0" y="0" width="1" height="1"/><rect x="1" y="0" width="1" height="1"/><rect x="5" y="0" width="1" height="1"/><rect x="6" y="0" width="1" height="1"/><rect x="0" y="1" width="1" height="1"/><rect x="1" y="1" width="1" height="1"/><rect x="2" y="1" width="1" height="1"/><rect x="4" y="1" width="1" height="1"/><rect x="5" y="1" width="1" height="1"/><rect x="6" y="1" width="1" height="1"/><rect x="1" y="2" width="1" height="1"/><rect x="2" y="2" width="1" height="1"/><rect x="3" y="2" width="1" height="1"/><rect x="4" y="2" width="1" height="1"/><rect x="5" y="2" width="1" height="1"/><rect x="2" y="3" width="1" height="1"/><rect x="3" y="3" width="1" height="1"/><rect x="4" y="3" width="1" height="1"/><rect x="1" y="4" width="1" height="1"/><rect x="2" y="4" width="1" height="1"/><rect x="3" y="4" width="1" height="1"/><rect x="4" y="4" width="1" height="1"/><rect x="5" y="4" width="1" height="1"/><rect x="0" y="5" width="1" height="1"/><rect x="1" y="5" width="1" height="1"/><rect x="2" y="5" width="1" height="1"/><rect x="4" y="5" width="1" height="1"/><rect x="5" y="5" width="1" height="1"/><rect x="6" y="5" width="1" height="1"/><rect x="0" y="6" width="1" height="1"/><rect x="1" y="6" width="1" height="1"/><rect x="5" y="6" width="1" height="1"/><rect x="6" y="6" width="1" height="1"/></svg>
<div class="t" style="left:602px;top:254px;color:#000;">ディレクトリ</div>
<div style="position:absolute;left:571px;top:302px;width:23px;height:23px;box-sizing:border-box;border:1px solid #606060;border-radius:2px;background:#EEEEEE;box-shadow:inset -1px -1px 0 #8C8C8C,inset -2px -2px 0 #C4C4C4,inset 3px 3px 0 #FFFFFF"></div>

<svg style="position:absolute;left:571px;top:302px" width="23" height="23"><circle cx="11.5" cy="11.5" r="6.5" fill="none" stroke="#000"/><text x="11.5" y="15" font-size="10" text-anchor="middle" font-family="Liberation Sans" font-weight="bold">?</text></svg>
<div style="position:absolute;left:671px;top:302px;width:79px;height:23px;box-sizing:border-box;border:1px solid #606060;border-radius:2px;background:#EEEEEE;box-shadow:inset -1px -1px 0 #8C8C8C,inset -2px -2px 0 #C4C4C4,inset 3px 3px 0 #FFFFFF"></div>

<div class="t" style="left:681px;top:307px;color:#000;">キャンセル</div>
<div style="position:absolute;left:757px;top:298px;width:87px;height:31px;box-sizing:border-box;border:1px solid #888;border-radius:3px;box-shadow:inset 1px 1px 0 #FFF, 1px 1px 0 #FFF"></div>
<div style="position:absolute;left:760px;top:301px;width:81px;height:24px;box-sizing:border-box;border:1px solid #606060;border-radius:2px;background:#EEEEEE;box-shadow:inset -1px -1px 0 #8C8C8C,inset -2px -2px 0 #C4C4C4,inset 3px 3px 0 #FFFFFF"></div>

<div class="t" style="left:789px;top:307px;color:#000;">了解</div>
</body></html>
